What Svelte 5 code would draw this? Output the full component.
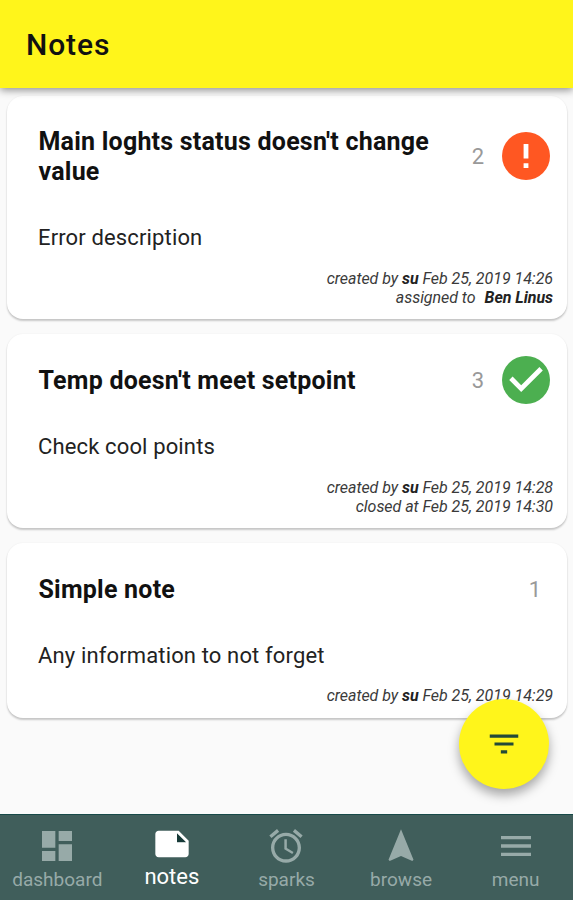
<script>
  const notes = [
    { title: "Main loghts status doesn't change value", count: 2, status: 'error', text: 'Error description', time: 'Feb 25, 2019 14:26', extra: 'assigned to', who: 'Ben Linus' },
    { title: "Temp doesn't meet setpoint", count: 3, status: 'done', text: 'Check cool points', time: 'Feb 25, 2019 14:28', extra: 'closed at Feb 25, 2019 14:30' },
    { title: 'Simple note', count: 1, text: 'Any information to not forget', time: 'Feb 25, 2019 14:29' }
  ];
  const tabs = [
    { label: 'dashboard', d: 'M3 13h8V3H3v10zm0 8h8v-6H3v6zm10 0h8V11h-8v10zm0-18v6h8V3h-8z' },
    { label: 'notes', active: true, d: 'M14 4H4c-1.1 0-2 .9-2 2v12.01c0 1.1.9 1.99 2 1.99h16c1.1 0 2-.9 2-2v-8l-6-6h-2zm1 7V5.5l5.5 5.5H15z' },
    { label: 'sparks', d: 'M22 5.72l-4.6-3.86-1.29 1.53 4.6 3.86L22 5.72zM7.88 3.39L6.6 1.86 2 5.71l1.29 1.53 4.59-3.85zM12.5 8H11v6l4.75 2.85.75-1.23-4-2.37V8zM12 4c-4.97 0-9 4.03-9 9s4.02 9 9 9c4.97 0 9-4.03 9-9s-4.03-9-9-9zm0 16c-3.87 0-7-3.13-7-7s3.13-7 7-7 7 3.13 7 7-3.13 7-7 7z' },
    { label: 'browse', d: 'M12 2L4.5 20.29l.71.71L12 18l6.79 3 .71-.71z' },
    { label: 'menu', d: 'M3 18h18v-2H3v2zm0-5h18v-2H3v2zm0-7v2h18V6H3z' }
  ];
</script>

<div class="app">
  <header><h1>Notes</h1></header>
  <main>
    {#each notes as n}
      <article>
        <div class="top">
          <h2>{n.title}</h2>
          <span class="count">{n.count}</span>
          {#if n.status}
            <svg class="status" viewBox="2 2 20 20">
              <circle cx="12" cy="12" r="10" fill={n.status === 'error' ? '#ff5722' : '#4caf50'} />
              {#if n.status === 'error'}
                <path d="M11 7h2v6h-2zM11 15h2v2h-2z" fill="#fff" />
              {:else}
                <path d="M10 17l-5-5 1.41-1.41L10 14.17l7.59-7.59L19 8z" fill="#fff" />
              {/if}
            </svg>
          {/if}
        </div>
        <p class="text">{n.text}</p>
        <div class="meta">
          <div>created by <b>su</b> {n.time}</div>
          {#if n.extra}
            <div>{n.extra}{#if n.who}<b class="who">{n.who}</b>{/if}</div>
          {/if}
        </div>
      </article>
    {/each}
  </main>
  <button class="fab" aria-label="Filter">
    <svg viewBox="0 0 24 24"><path d="M10 18h4v-2h-4v2zM3 6v2h18V6H3zm3 7h12v-2H6v2z" /></svg>
  </button>
  <nav>
    {#each tabs as t}
      <div class="tab" class:active={t.active}>
        <svg viewBox="0 0 24 24">
          {#if t.active}<path class="fold" d="M15 5.5V11h5.5z" />{/if}
          <path fill-rule="evenodd" d={t.d} />
        </svg>
        <span>{t.label}</span>
      </div>
    {/each}
  </nav>
</div>

<style>
  .app {
    position: relative;
    width: 573px;
    height: 900px;
    display: flex;
    flex-direction: column;
    overflow: hidden;
    background: #fafafa;
    color: #111;
    font-family: Roboto, "Liberation Sans", sans-serif;
  }
  header {
    flex: none;
    height: 88px;
    display: flex;
    align-items: center;
    padding-left: 26px;
    background: #fff51b;
    box-shadow: 0 2px 8px rgba(0, 0, 0, 0.45);
    z-index: 1;
  }
  h1 {
    margin: 0;
    font-size: 30px;
    font-weight: 500;
    letter-spacing: 0.9px;
  }
  main {
    flex: 1;
    display: flex;
    flex-direction: column;
    gap: 15px;
    padding: 8px 6px 0 7px;
  }
  article {
    box-sizing: border-box;
    padding: 22px 14px 12px 31px;
    border-radius: 16px;
    background: #fff;
    box-shadow: 0 2px 2px rgba(0, 0, 0, 0.2), 0 0 2px rgba(0, 0, 0, 0.06);
  }
  article:first-child {
    padding-top: 21px;
  }
  .top {
    display: flex;
    align-items: center;
    min-height: 48px;
    padding: 0 3px 0 0;
  }
  article:first-child .top {
    min-height: 78px;
  }
  h2 {
    flex: 1;
    margin: 0;
    padding: 2px 0 0 0.5px;
    font-size: 25px;
    line-height: 30px;
    font-weight: 700;
    letter-spacing: 0.22px;
  }
  .count {
    padding: 0 10px 0 24px;
    font-size: 22px;
    color: #999;
  }
  .count:last-child {
    padding-right: 9px;
  }
  .status {
    width: 48px;
    height: 48px;
    margin-left: 8px;
  }
  .text {
    margin: 29px 0 0;
    font-size: 22px;
    line-height: 28px;
    letter-spacing: 0.14px;
    color: #222;
  }
  .meta {
    margin-top: 17px;
    text-align: right;
    font-size: 16px;
    line-height: 19px;
    letter-spacing: -0.04px;
    font-style: italic;
    color: #3a3a3a;
  }
  article:last-child .meta {
    margin-top: 16px;
    padding-bottom: 1px;
  }
  b {
    color: #222;
  }
  .who {
    margin-left: 9px;
  }
  .fab {
    position: absolute;
    left: 459px;
    top: 699px;
    width: 90px;
    height: 90px;
    padding: 0;
    border: 0;
    border-radius: 50%;
    display: flex;
    align-items: center;
    justify-content: center;
    background: #fff51b;
    box-shadow: 0 6px 11px rgba(0, 0, 0, 0.34);
  }
  .fab svg {
    width: 38px;
    height: 38px;
    margin-right: 1px;
    fill: #234a38;
  }
  nav {
    flex: none;
    box-sizing: border-box;
    height: 86px;
    display: flex;
    border-top: 1px solid #174a48;
    background: #405e5b;
  }
  .tab {
    flex: 1;
    display: flex;
    flex-direction: column;
    align-items: center;
    padding-top: 11px;
    color: #97aaa8;
    font-size: 19px;
    line-height: 24px;
  }
  .tab svg {
    flex: none;
    width: 40px;
    height: 40px;
    fill: currentColor;
  }
  .tab .fold {
    fill: #173a38;
  }
  .tab span {
    margin-top: 2px;
  }
  .active {
    padding-top: 9px;
    color: #fff;
    font-size: 22px;
  }
  .active span {
    margin-top: 1px;
  }
</style>
